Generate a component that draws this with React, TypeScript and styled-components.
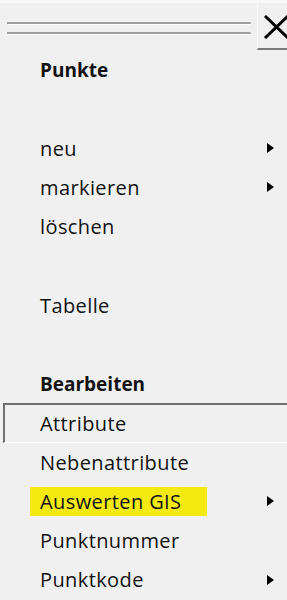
import * as React from 'react';
import styled, { createGlobalStyle } from 'styled-components';

const GlobalStyle = createGlobalStyle`
  html, body {
    margin: 0;
    padding: 0;
    background: #f0f0f0;
    overflow: hidden;
  }
`

const Panel = styled.div`
  width: 287px;
  height: 600px;
  overflow: hidden;
  background: #f0f0f0;
  font-family: 'Open Sans', 'Noto Sans', sans-serif;
  color: #121212;
`

const Header = styled.div`
  display: flex;
  height: 47px;
  border-top: 3px solid #f8f8f8;
`

const Grip = styled.div`
  flex: 1;
  display: flex;
  flex-direction: column;
  gap: 7px;
  padding: 19px 6px 0 7px;
`

const GripLine = styled.div`
  height: 2px;
  background: #9e9e9e;
  border-bottom: 1px solid #fdfdfd;
  border-radius: 0 2px 2px 0;
`

const CloseButton = styled.div`
  width: 30px;
  flex: none;
  box-sizing: border-box;
  border-left: 1px solid #fbfbfb;
  border-bottom: 2px solid #7a7a7a;
  padding: 12px 0 0 5px;
  overflow: hidden;
`

const Menu = styled.div`
  display: flex;
  flex-direction: column;
`

const Row = styled.div<{ $framed?: boolean; $bold?: boolean }>`
  height: 39.25px;
  box-sizing: border-box;
  display: flex;
  align-items: center;
  padding-left: 40px;
  font-size: ${p => (p.$bold ? '19px' : '20px')};
  font-weight: ${p => (p.$bold ? 700 : 400)};
  letter-spacing: ${p => (p.$bold ? '0' : '0.4px')};
  white-space: nowrap;
  ${p => p.$framed && `
    margin-left: 3px;
    margin-right: -4px;
    padding-left: 35px;
    border-top: 2px solid #6f6f6f;
    border-left: 2px solid #6f6f6f;
    border-bottom: 1px solid #ffffff;
  `}
`

const Highlight = styled.span`
  display: flex;
  align-items: center;
  box-sizing: border-box;
  width: 177px;
  height: 29px;
  margin-left: -10px;
  padding-left: 10px;
  background: #f4ea12;
`

const Arrow = styled.span`
  margin-left: auto;
  margin-right: 13px;
  width: 0;
  height: 0;
  border-left: 7px solid #000;
  border-top: 5px solid transparent;
  border-bottom: 5px solid transparent;
`

type Item = { label?: string; bold?: boolean; sub?: boolean; framed?: boolean; marked?: boolean }

const items: Item[] = [
  { label: 'Punkte', bold: true },
  {},
  { label: 'neu', sub: true },
  { label: 'markieren', sub: true },
  { label: 'löschen' },
  {},
  { label: 'Tabelle' },
  {},
  { label: 'Bearbeiten', bold: true },
  { label: 'Attribute', framed: true },
  { label: 'Nebenattribute' },
  { label: 'Auswerten GIS', sub: true, marked: true },
  { label: 'Punktnummer' },
  { label: 'Punktkode', sub: true },
]

export default function App() {
  return <Panel>
    <GlobalStyle />
    <Header>
      <Grip>
        <GripLine />
        <GripLine />
      </Grip>
      <CloseButton>
        <svg width="27" height="24" viewBox="0 0 27 24">
          <path d="M2 1 L25 23 M25 1 L2 23" stroke="#000" strokeWidth="3" fill="none" />
        </svg>
      </CloseButton>
    </Header>
    <Menu>
      {items.map((it, i) => (
        <Row key={i} $bold={it.bold} $framed={it.framed}>
          {it.marked ? <Highlight>{it.label}</Highlight> : it.label}
          {it.sub && <Arrow />}
        </Row>
      ))}
    </Menu>
  </Panel>
}
